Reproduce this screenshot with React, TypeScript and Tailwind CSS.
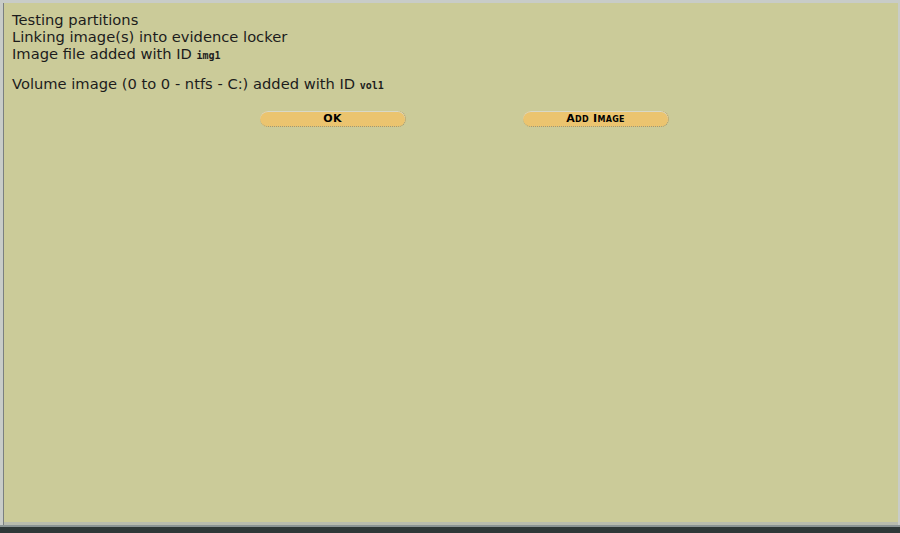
import React from "react";

const Btn = ({ label }: { label: string }) => (
  <button className="w-[146px] h-[16px] rounded-[8px] bg-[#ebc46f] border-b border-r border-dotted border-[#9a9a7a] shadow-[inset_0_1px_0_#d8d8c8] flex items-center justify-center text-[11px] font-bold text-black [font-variant:small-caps] tracking-[0.3px] leading-none [font-family:'DejaVu_Sans',sans-serif]">
    {label}
  </button>
);

export default function App() {
  return (
    <div className="w-[900px] h-[533px] bg-[#3c4a4a] flex flex-col overflow-hidden">
      <div className="h-[3px] bg-[#c8ccc8]" />
      <div className="flex flex-1">
        <div className="w-[4px] bg-[#c8ccc8] border-r border-[#7a8080]" />
        <div className="flex-1 bg-[#cbcb99] border-b-[3px] border-[#b8bcae] pl-[8px] pt-[8px] text-[#1c1c1c] text-[14.7px] leading-[17px] [font-family:'DejaVu_Sans',sans-serif]">
          <div>Testing partitions</div>
          <div>Linking image(s) into evidence locker</div>
          <div>
            Image file added with ID <span className="text-[10px] font-bold [font-family:'DejaVu_Sans_Mono',monospace]">img1</span>
          </div>
          <div className="mt-[11px]">
            Volume image (0 to 0 - ntfs - C:) added with ID <span className="text-[10px] font-bold [font-family:'DejaVu_Sans_Mono',monospace]">vol1</span>
          </div>
          <div className="flex gap-[117px] pl-[248px] mt-[17px]">
            <Btn label="OK" />
            <Btn label="Add Image" />
          </div>
        </div>
        <div className="w-[2px] bg-[#c8ccc8]" />
      </div>
      <div className="h-[2px] bg-[#8a9494]" />
      <div className="h-[6px] bg-[#2e3838]" />
    </div>
  );
}
